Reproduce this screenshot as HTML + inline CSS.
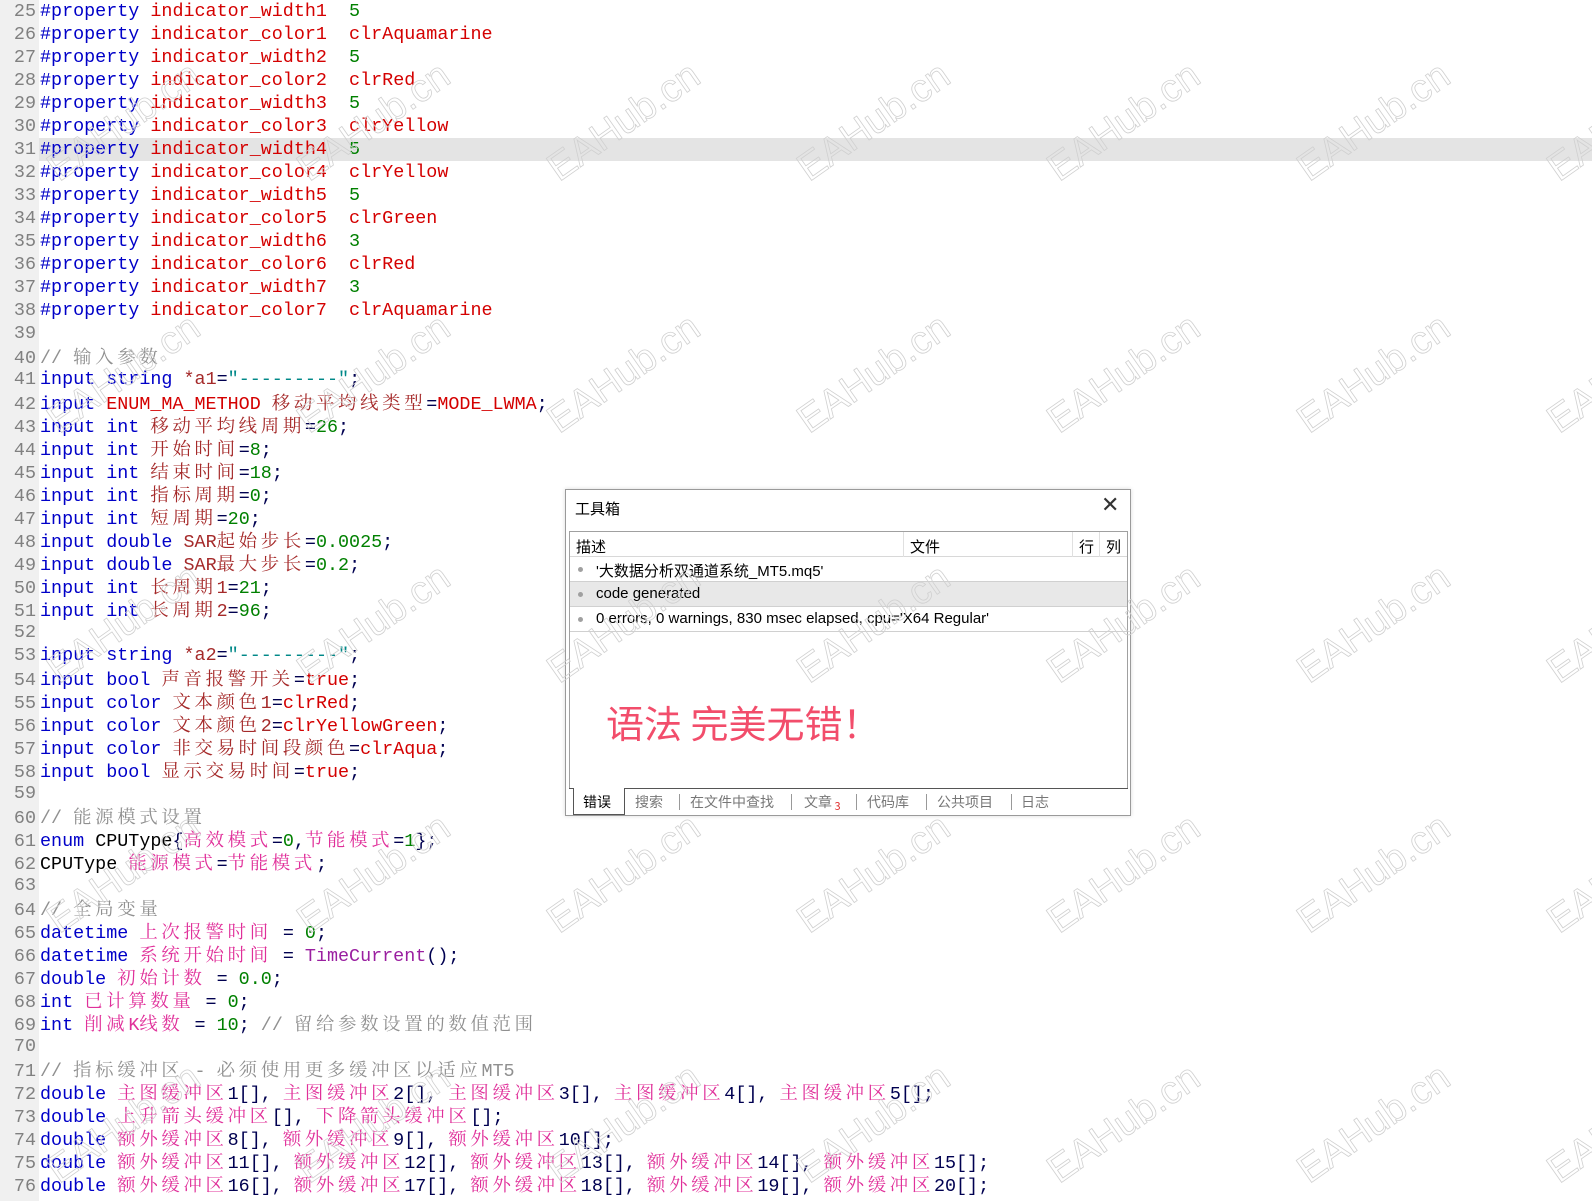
<!DOCTYPE html>
<html><head><meta charset="utf-8">
<style>
*{margin:0;padding:0;box-sizing:border-box}
html,body{width:1592px;height:1201px;overflow:hidden;background:#fff}
#gut{position:absolute;left:0;top:0;width:39px;height:1201px;background:#f0f0f0}
#hl{position:absolute;left:39px;top:138px;width:1553px;height:23px;background:#e4e4e4}
#code{position:absolute;left:0;top:0;font-family:"Liberation Mono",monospace;font-size:18.4px;line-height:23px;color:#000050}
.l{height:23px;position:relative;white-space:pre}
.ln{display:inline-block;width:36px;text-align:right;color:#808080;margin-right:4px}
.k{color:#0000c8}.r{color:#d40000}.n{color:#008000}.v{color:#a52a2a}.p{color:#e0309a}.c{color:#909090}.s{color:#008888}.f{color:#9a1fa0}.b{color:#000}
.z{font-family:"Noto Serif CJK SC","Noto Sans CJK SC",serif;letter-spacing:3.68px;font-size:18.4px}
.wm{position:absolute;font-family:"Liberation Sans",sans-serif;font-size:39px;color:transparent;-webkit-text-stroke:0.8px #d0d0d0;transform:translate(-50%,-50%) rotate(-35deg);white-space:nowrap;z-index:10}
#dlg{position:absolute;left:565px;top:489px;width:566px;height:327px;border:1px solid #9a9a9a;background:#fff;font-family:"Liberation Sans","Noto Sans CJK SC",sans-serif;font-size:15px;color:#000;box-shadow:0 0 4px rgba(0,0,0,.15)}
#dlg .t{position:absolute;left:9px;top:8px}
#dlg .x{position:absolute;left:535px;top:2px;font-size:22px;color:#333}
#pan{position:absolute;left:3px;top:41px;width:559px;height:258px;border:1px solid #a0a0a0;background:#fff}
.hd{position:absolute;top:0;left:0;right:0;height:25px;border-bottom:1px solid #d8d8d8}
.hd span{position:absolute;top:4px}
.cs{position:absolute;top:0;width:1px;height:25px;background:#e0e0e0}
.row{position:absolute;left:0;right:0;height:25px;border-bottom:1px solid #d0d0d0}
.row .d{position:absolute;left:8px;top:10px;width:5px;height:5px;border-radius:50%;background:#a0a0a0}
.row .tx{position:absolute;left:26px;top:3px}
.big{position:absolute;left:36px;top:162px;font-family:"Noto Sans CJK SC",sans-serif;font-size:38px;color:#f24d6b}
#tabs{position:absolute;left:3px;top:298px;width:559px;height:26px;border-top:1px solid #555;font-family:"Noto Sans CJK SC",sans-serif;font-size:14px;color:#777}
#tabs span{position:absolute;top:3px}
#tabs .sep{position:absolute;top:5px;width:1px;height:16px;background:#999}
#tabs .act{position:absolute;left:4px;top:-1px;width:52px;height:27px;border:1px solid #555;border-top:none;background:#fff}
</style></head><body>
<div id="gut"></div><div id="hl"></div>
<div id="code">
<div class="l"><span class="ln">25</span><span class="k">#property</span> <span class="r">indicator_width1</span>  <span class="n">5</span></div>
<div class="l"><span class="ln">26</span><span class="k">#property</span> <span class="r">indicator_color1</span>  <span class="r">clrAquamarine</span></div>
<div class="l"><span class="ln">27</span><span class="k">#property</span> <span class="r">indicator_width2</span>  <span class="n">5</span></div>
<div class="l"><span class="ln">28</span><span class="k">#property</span> <span class="r">indicator_color2</span>  <span class="r">clrRed</span></div>
<div class="l"><span class="ln">29</span><span class="k">#property</span> <span class="r">indicator_width3</span>  <span class="n">5</span></div>
<div class="l"><span class="ln">30</span><span class="k">#property</span> <span class="r">indicator_color3</span>  <span class="r">clrYellow</span></div>
<div class="l"><span class="ln">31</span><span class="k">#property</span> <span class="r">indicator_width4</span>  <span class="n">5</span></div>
<div class="l"><span class="ln">32</span><span class="k">#property</span> <span class="r">indicator_color4</span>  <span class="r">clrYellow</span></div>
<div class="l"><span class="ln">33</span><span class="k">#property</span> <span class="r">indicator_width5</span>  <span class="n">5</span></div>
<div class="l"><span class="ln">34</span><span class="k">#property</span> <span class="r">indicator_color5</span>  <span class="r">clrGreen</span></div>
<div class="l"><span class="ln">35</span><span class="k">#property</span> <span class="r">indicator_width6</span>  <span class="n">3</span></div>
<div class="l"><span class="ln">36</span><span class="k">#property</span> <span class="r">indicator_color6</span>  <span class="r">clrRed</span></div>
<div class="l"><span class="ln">37</span><span class="k">#property</span> <span class="r">indicator_width7</span>  <span class="n">3</span></div>
<div class="l"><span class="ln">38</span><span class="k">#property</span> <span class="r">indicator_color7</span>  <span class="r">clrAquamarine</span></div>
<div class="l"><span class="ln">39</span></div>
<div class="l"><span class="ln">40</span><span class="c">// <span class="z">输入参数</span></span></div>
<div class="l"><span class="ln">41</span><span class="k">input</span> <span class="k">string</span> <span class="v">*a1</span>=<span class="s">"---------"</span>;</div>
<div class="l"><span class="ln">42</span><span class="k">input</span> <span class="r">ENUM_MA_METHOD</span> <span class="v z">移动平均线类型</span>=<span class="r">MODE_LWMA</span>;</div>
<div class="l"><span class="ln">43</span><span class="k">input</span> <span class="k">int</span> <span class="v z">移动平均线周期</span>=<span class="n">26</span>;</div>
<div class="l"><span class="ln">44</span><span class="k">input</span> <span class="k">int</span> <span class="v z">开始时间</span>=<span class="n">8</span>;</div>
<div class="l"><span class="ln">45</span><span class="k">input</span> <span class="k">int</span> <span class="v z">结束时间</span>=<span class="n">18</span>;</div>
<div class="l"><span class="ln">46</span><span class="k">input</span> <span class="k">int</span> <span class="v z">指标周期</span>=<span class="n">0</span>;</div>
<div class="l"><span class="ln">47</span><span class="k">input</span> <span class="k">int</span> <span class="v z">短周期</span>=<span class="n">20</span>;</div>
<div class="l"><span class="ln">48</span><span class="k">input</span> <span class="k">double</span> <span class="v">SAR<span class="z">起始步长</span></span>=<span class="n">0.0025</span>;</div>
<div class="l"><span class="ln">49</span><span class="k">input</span> <span class="k">double</span> <span class="v">SAR<span class="z">最大步长</span></span>=<span class="n">0.2</span>;</div>
<div class="l"><span class="ln">50</span><span class="k">input</span> <span class="k">int</span> <span class="v"><span class="z">长周期</span>1</span>=<span class="n">21</span>;</div>
<div class="l"><span class="ln">51</span><span class="k">input</span> <span class="k">int</span> <span class="v"><span class="z">长周期</span>2</span>=<span class="n">96</span>;</div>
<div class="l"><span class="ln">52</span></div>
<div class="l"><span class="ln">53</span><span class="k">input</span> <span class="k">string</span> <span class="v">*a2</span>=<span class="s">"---------"</span>;</div>
<div class="l"><span class="ln">54</span><span class="k">input</span> <span class="k">bool</span> <span class="v z">声音报警开关</span>=<span class="r">true</span>;</div>
<div class="l"><span class="ln">55</span><span class="k">input</span> <span class="k">color</span> <span class="v"><span class="z">文本颜色</span>1</span>=<span class="r">clrRed</span>;</div>
<div class="l"><span class="ln">56</span><span class="k">input</span> <span class="k">color</span> <span class="v"><span class="z">文本颜色</span>2</span>=<span class="r">clrYellowGreen</span>;</div>
<div class="l"><span class="ln">57</span><span class="k">input</span> <span class="k">color</span> <span class="v z">非交易时间段颜色</span>=<span class="r">clrAqua</span>;</div>
<div class="l"><span class="ln">58</span><span class="k">input</span> <span class="k">bool</span> <span class="v z">显示交易时间</span>=<span class="r">true</span>;</div>
<div class="l"><span class="ln">59</span></div>
<div class="l"><span class="ln">60</span><span class="c">// <span class="z">能源模式设置</span></span></div>
<div class="l"><span class="ln">61</span><span class="k">enum</span> <span class="b">CPUType</span>{<span class="p z">高效模式</span>=<span class="n">0</span>,<span class="p z">节能模式</span>=<span class="n">1</span>};</div>
<div class="l"><span class="ln">62</span><span class="b">CPUType</span> <span class="p z">能源模式</span>=<span class="p z">节能模式</span>;</div>
<div class="l"><span class="ln">63</span></div>
<div class="l"><span class="ln">64</span><span class="c">// <span class="z">全局变量</span></span></div>
<div class="l"><span class="ln">65</span><span class="k">datetime</span> <span class="p z">上次报警时间</span> = <span class="n">0</span>;</div>
<div class="l"><span class="ln">66</span><span class="k">datetime</span> <span class="p z">系统开始时间</span> = <span class="f">TimeCurrent</span>();</div>
<div class="l"><span class="ln">67</span><span class="k">double</span> <span class="p z">初始计数</span> = <span class="n">0.0</span>;</div>
<div class="l"><span class="ln">68</span><span class="k">int</span> <span class="p z">已计算数量</span> = <span class="n">0</span>;</div>
<div class="l"><span class="ln">69</span><span class="k">int</span> <span class="p"><span class="z">削减</span>K<span class="z">线数</span></span> = <span class="n">10</span>; <span class="c">// <span class="z">留给参数设置的数值范围</span></span></div>
<div class="l"><span class="ln">70</span></div>
<div class="l"><span class="ln">71</span><span class="c">// <span class="z">指标缓冲区</span> - <span class="z">必须使用更多缓冲区以适应</span>MT5</span></div>
<div class="l"><span class="ln">72</span><span class="k">double</span> <span class="p z">主图缓冲区</span>1[], <span class="p z">主图缓冲区</span>2[], <span class="p z">主图缓冲区</span>3[], <span class="p z">主图缓冲区</span>4[], <span class="p z">主图缓冲区</span>5[];</div>
<div class="l"><span class="ln">73</span><span class="k">double</span> <span class="p z">上升箭头缓冲区</span>[], <span class="p z">下降箭头缓冲区</span>[];</div>
<div class="l"><span class="ln">74</span><span class="k">double</span> <span class="p z">额外缓冲区</span>8[], <span class="p z">额外缓冲区</span>9[], <span class="p z">额外缓冲区</span>10[];</div>
<div class="l"><span class="ln">75</span><span class="k">double</span> <span class="p z">额外缓冲区</span>11[], <span class="p z">额外缓冲区</span>12[], <span class="p z">额外缓冲区</span>13[], <span class="p z">额外缓冲区</span>14[], <span class="p z">额外缓冲区</span>15[];</div>
<div class="l"><span class="ln">76</span><span class="k">double</span> <span class="p z">额外缓冲区</span>16[], <span class="p z">额外缓冲区</span>17[], <span class="p z">额外缓冲区</span>18[], <span class="p z">额外缓冲区</span>19[], <span class="p z">额外缓冲区</span>20[];</div>
</div>

<div id="dlg">
<div class="t">工具箱</div>
<div class="x">✕</div>
<div id="pan">
 <div class="hd"><span style="left:6px">描述</span><div class="cs" style="left:333px"></div><span style="left:340px">文件</span><div class="cs" style="left:502px"></div><span style="left:509px">行</span><div class="cs" style="left:529px"></div><span style="left:536px">列</span></div>
 <div class="row" style="top:25px"><div class="d"></div><div class="tx">'大数据分析双通道系统_MT5.mq5'</div></div>
 <div class="row" style="top:50px;background:#e8e8e8"><div class="d"></div><div class="tx">code generated</div></div>
 <div class="row" style="top:75px"><div class="d"></div><div class="tx">0 errors, 0 warnings, 830 msec elapsed, cpu='X64 Regular'</div></div>
 <div class="big">语法 完美无错！</div>
</div>
<div id="tabs">
 <div class="act"></div>
 <span style="left:14px;color:#000">错误</span>
 <span style="left:66px">搜索</span><div class="sep" style="left:110px"></div>
 <span style="left:121px">在文件中查找</span><div class="sep" style="left:222px"></div>
 <span style="left:235px">文章<small style="color:#e03030;font-size:11px;vertical-align:-3px"> 3</small></span><div class="sep" style="left:287px"></div>
 <span style="left:298px">代码库</span><div class="sep" style="left:357px"></div>
 <span style="left:368px">公共项目</span><div class="sep" style="left:442px"></div>
 <span style="left:452px">日志</span>
</div>
</div>

<div class="wm" style="left:124px;top:122px">EAHub.cn</div><div class="wm" style="left:374px;top:122px">EAHub.cn</div><div class="wm" style="left:624px;top:122px">EAHub.cn</div><div class="wm" style="left:874px;top:122px">EAHub.cn</div><div class="wm" style="left:1124px;top:122px">EAHub.cn</div><div class="wm" style="left:1374px;top:122px">EAHub.cn</div><div class="wm" style="left:1624px;top:122px">EAHub.cn</div>
<div class="wm" style="left:124px;top:374px">EAHub.cn</div><div class="wm" style="left:374px;top:374px">EAHub.cn</div><div class="wm" style="left:624px;top:374px">EAHub.cn</div><div class="wm" style="left:874px;top:374px">EAHub.cn</div><div class="wm" style="left:1124px;top:374px">EAHub.cn</div><div class="wm" style="left:1374px;top:374px">EAHub.cn</div><div class="wm" style="left:1624px;top:374px">EAHub.cn</div>
<div class="wm" style="left:124px;top:624px">EAHub.cn</div><div class="wm" style="left:374px;top:624px">EAHub.cn</div><div class="wm" style="left:624px;top:624px">EAHub.cn</div><div class="wm" style="left:874px;top:624px">EAHub.cn</div><div class="wm" style="left:1124px;top:624px">EAHub.cn</div><div class="wm" style="left:1374px;top:624px">EAHub.cn</div><div class="wm" style="left:1624px;top:624px">EAHub.cn</div>
<div class="wm" style="left:124px;top:874px">EAHub.cn</div><div class="wm" style="left:374px;top:874px">EAHub.cn</div><div class="wm" style="left:624px;top:874px">EAHub.cn</div><div class="wm" style="left:874px;top:874px">EAHub.cn</div><div class="wm" style="left:1124px;top:874px">EAHub.cn</div><div class="wm" style="left:1374px;top:874px">EAHub.cn</div><div class="wm" style="left:1624px;top:874px">EAHub.cn</div>
<div class="wm" style="left:124px;top:1124px">EAHub.cn</div><div class="wm" style="left:374px;top:1124px">EAHub.cn</div><div class="wm" style="left:624px;top:1124px">EAHub.cn</div><div class="wm" style="left:874px;top:1124px">EAHub.cn</div><div class="wm" style="left:1124px;top:1124px">EAHub.cn</div><div class="wm" style="left:1374px;top:1124px">EAHub.cn</div><div class="wm" style="left:1624px;top:1124px">EAHub.cn</div>
</body></html>
